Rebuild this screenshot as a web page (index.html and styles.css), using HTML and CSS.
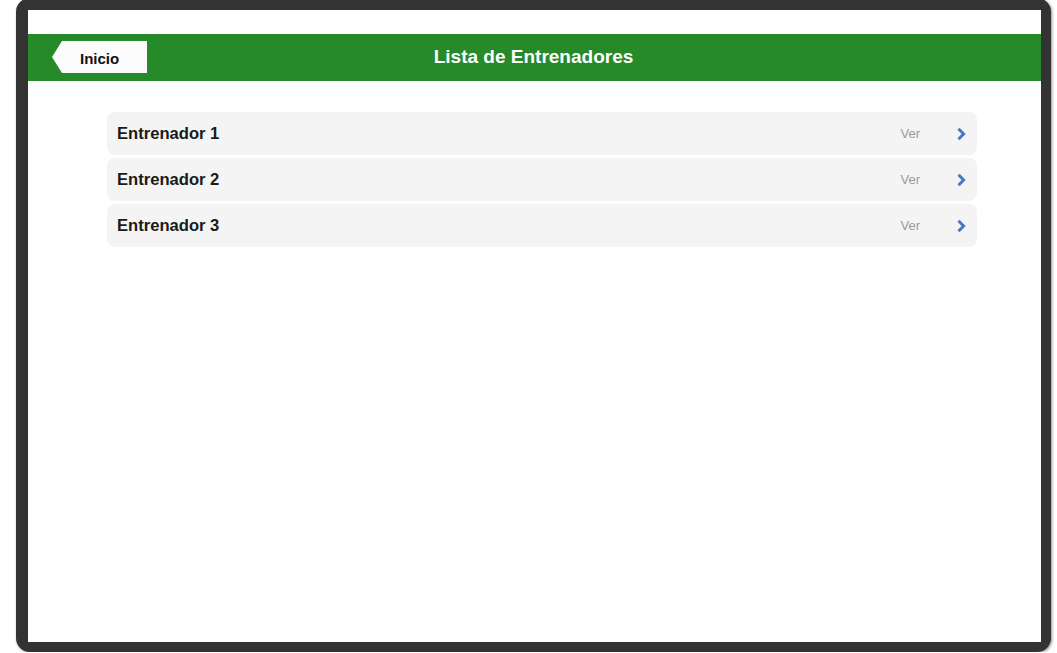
FILE: index.html
```html
<!DOCTYPE html>
<html lang="es">
<head>
<meta charset="utf-8">
<title>Lista de Entrenadores</title>
<link rel="stylesheet" href="styles.css">
</head>
<body>
<div class="device">
  <div class="screen">
    <div class="statusbar"></div>
    <header class="navbar">
      <a class="back"><span class="back-label">Inicio</span></a>
      <h1 class="title">Lista de Entrenadores</h1>
    </header>
    <ul class="list">
      <li class="item"><span class="name">Entrenador 1</span><span class="ver">Ver</span><svg class="chev" width="11" height="14" viewBox="0 0 11 14"><path d="M2.5 1.8 L7.6 7 L2.5 12.2" fill="none" stroke="#4a77c4" stroke-width="3" stroke-linejoin="miter"/></svg></li>
      <li class="item"><span class="name">Entrenador 2</span><span class="ver">Ver</span><svg class="chev" width="11" height="14" viewBox="0 0 11 14"><path d="M2.5 1.8 L7.6 7 L2.5 12.2" fill="none" stroke="#4a77c4" stroke-width="3" stroke-linejoin="miter"/></svg></li>
      <li class="item"><span class="name">Entrenador 3</span><span class="ver">Ver</span><svg class="chev" width="11" height="14" viewBox="0 0 11 14"><path d="M2.5 1.8 L7.6 7 L2.5 12.2" fill="none" stroke="#4a77c4" stroke-width="3" stroke-linejoin="miter"/></svg></li>
    </ul>
  </div>
</div>
</body>
</html>
```

FILE: styles.css
```css
html, body {
  margin: 0;
  padding: 0;
  background: #ffffff;
  overflow: hidden;
  font-family: "Liberation Sans", Arial, sans-serif;
}

.device {
  box-sizing: border-box;
  width: 1035px;
  height: 654px;
  margin: -2px 0 0 16px;
  border-style: solid;
  border-color: #333333;
  border-width: 12px 10px 10px 12px;
  border-radius: 14px;
  box-shadow: 1px 1px 3px rgba(0, 0, 0, 0.45);
  background: #ffffff;
}

.screen {
  height: 100%;
  background: #ffffff;
  display: flex;
  flex-direction: column;
}

.statusbar {
  height: 24px;
  flex: none;
}

.navbar {
  height: 47px;
  flex: none;
  background: #258a27;
  display: flex;
  align-items: center;
  justify-content: center;
  position: relative;
}

.title {
  margin: -3px 2px 0 0;
  color: #ffffff;
  font-size: 19px;
  font-weight: bold;
  line-height: 1;
}

.back {
  position: absolute;
  left: 24px;
  top: 7px;
  height: 32px;
  width: 95px;
  display: flex;
  align-items: center;
  background: #fbfbfb;
  clip-path: polygon(0 50%, 10px 0, 100% 0, 100% 100%, 10px 100%);
}

.back-label {
  font-size: 15px;
  font-weight: bold;
  color: #111111;
  padding-left: 28px;
  padding-top: 2px;
}

.list {
  list-style: none;
  margin: 31px 64px 0 79px;
  padding: 0;
  display: flex;
  flex-direction: column;
  gap: 3px;
}

.item {
  height: 43px;
  background: #f4f4f4;
  border-radius: 8px;
  display: flex;
  align-items: center;
  padding: 0 10px 0 10px;
}

.name {
  flex: 1;
  font-size: 16.6px;
  font-weight: bold;
  color: #1a1a1a;
}

.ver {
  font-size: 13px;
  color: #9a9a9a;
  margin-right: 36px;
}

.chev {
  display: block;
}
```
